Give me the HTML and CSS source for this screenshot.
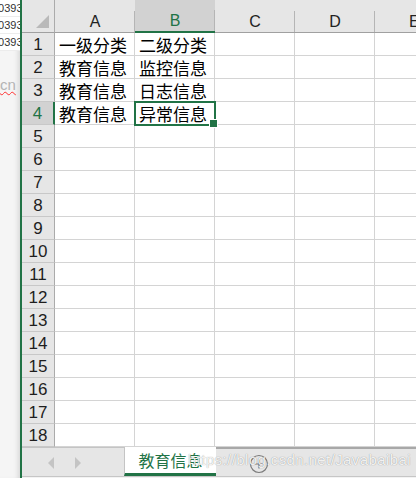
FILE: index.html
```html
<!DOCTYPE html>
<html lang="zh-CN">

<head>
  <meta charset="UTF-8">
  <meta name="viewport" content="width=device-width, initial-scale=1.0">
  <title>Excel sheet</title>
  <link rel="stylesheet" href="styles.css">
</head>

<body>
  <div class="screen">
    <div class="side">
      <div class="side-row">10393</div>
      <div class="side-row">10393</div>
      <div class="side-row">10393</div>
      <div class="side-rest"><span class="typo">cn</span></div>
    </div>

    <div class="book">
      <div class="sheet">
        <div class="corner">
          <svg width="14" height="14" viewBox="0 0 14 14"><polygon points="13,0 13,13 0,13" fill="#b9b9b9" /></svg>
        </div>
        <div class="col">A</div>
        <div class="col sel">B</div>
        <div class="col">C</div>
        <div class="col">D</div>
        <div class="col last">E</div>

        <div class="row">1</div>
        <div class="cell">一级分类</div>
        <div class="cell">二级分类</div>
        <div class="cell"></div>
        <div class="cell"></div>
        <div class="cell"></div>

        <div class="row">2</div>
        <div class="cell">教育信息</div>
        <div class="cell">监控信息</div>
        <div class="cell"></div>
        <div class="cell"></div>
        <div class="cell"></div>

        <div class="row">3</div>
        <div class="cell">教育信息</div>
        <div class="cell">日志信息</div>
        <div class="cell"></div>
        <div class="cell"></div>
        <div class="cell"></div>

        <div class="row sel">4</div>
        <div class="cell">教育信息</div>
        <div class="cell active">异常信息</div>
        <div class="cell"></div>
        <div class="cell"></div>
        <div class="cell"></div>

        <div class="row">5</div>
        <div class="cell"></div><div class="cell"></div><div class="cell"></div><div class="cell"></div><div class="cell"></div>
        <div class="row">6</div>
        <div class="cell"></div><div class="cell"></div><div class="cell"></div><div class="cell"></div><div class="cell"></div>
        <div class="row">7</div>
        <div class="cell"></div><div class="cell"></div><div class="cell"></div><div class="cell"></div><div class="cell"></div>
        <div class="row">8</div>
        <div class="cell"></div><div class="cell"></div><div class="cell"></div><div class="cell"></div><div class="cell"></div>
        <div class="row">9</div>
        <div class="cell"></div><div class="cell"></div><div class="cell"></div><div class="cell"></div><div class="cell"></div>
        <div class="row">10</div>
        <div class="cell"></div><div class="cell"></div><div class="cell"></div><div class="cell"></div><div class="cell"></div>
        <div class="row">11</div>
        <div class="cell"></div><div class="cell"></div><div class="cell"></div><div class="cell"></div><div class="cell"></div>
        <div class="row">12</div>
        <div class="cell"></div><div class="cell"></div><div class="cell"></div><div class="cell"></div><div class="cell"></div>
        <div class="row">13</div>
        <div class="cell"></div><div class="cell"></div><div class="cell"></div><div class="cell"></div><div class="cell"></div>
        <div class="row">14</div>
        <div class="cell"></div><div class="cell"></div><div class="cell"></div><div class="cell"></div><div class="cell"></div>
        <div class="row">15</div>
        <div class="cell"></div><div class="cell"></div><div class="cell"></div><div class="cell"></div><div class="cell"></div>
        <div class="row">16</div>
        <div class="cell"></div><div class="cell"></div><div class="cell"></div><div class="cell"></div><div class="cell"></div>
        <div class="row">17</div>
        <div class="cell"></div><div class="cell"></div><div class="cell"></div><div class="cell"></div><div class="cell"></div>
        <div class="row">18</div>
        <div class="cell"></div><div class="cell"></div><div class="cell"></div><div class="cell"></div><div class="cell"></div>
      </div>

      <div class="tabbar">
        <div class="nav">
          <svg width="8" height="12" viewBox="0 0 8 12"><polygon points="7,0 7,12 1,6" fill="#c4c4c4" /></svg>
          <svg width="8" height="12" viewBox="0 0 8 12"><polygon points="1,0 1,12 7,6" fill="#c4c4c4" /></svg>
        </div>
        <div class="tab">教育信息</div>
        <div class="rest">
          <svg class="add" width="20" height="20" viewBox="0 0 20 20">
            <circle cx="10" cy="10" r="8.5" fill="none" stroke="#7b7b7b" stroke-width="1.2" />
            <path d="M5.5 10 H14.5 M10 5.5 V14.5" stroke="#7b7b7b" stroke-width="1.2" />
          </svg>
        </div>
      </div>
      <div class="status"></div>

      <div class="watermark">https://blog.csdn.net/Javabaibai</div>
    </div>
  </div>
</body>

</html>
```

FILE: styles.css
```css
* {
  margin: 0;
  padding: 0;
  box-sizing: border-box;
}

body {
  width: 416px;
  height: 478px;
  overflow: hidden;
  background-color: #fff;
  font-family: "Liberation Sans", Arial, sans-serif;
}

.screen {
  display: flex;
  height: 478px;
}

/* 左側にはみ出している別ウィンドウ */
.side {
  width: 20px;
  display: flex;
  flex-direction: column;
  overflow: hidden;
  background-color: #f5f5f5;
  box-shadow: inset -5px 0 5px -3px rgba(0, 0, 0, 0.12);
}

.side-row {
  height: 17px;
  line-height: 17px;
  font-size: 11px;
  color: #333;
  background-color: #fff;
  border-bottom: 1px solid #ececec;
  text-indent: -8px;
  white-space: nowrap;
}

.side-rest {
  flex: 1;
  padding-top: 26px;
}

.typo {
  display: block;
  font-size: 15px;
  line-height: 16px;
  color: #b4b4b4;
  white-space: nowrap;
  text-decoration: underline wavy #ff3030;
  text-decoration-thickness: 1px;
}

.book {
  position: relative;
  flex: 1;
  display: flex;
  flex-direction: column;
  border-left: 2px solid #217346;
  overflow: hidden;
}

.sheet {
  display: grid;
  grid-template-columns: 33px repeat(4, 80px) 1fr;
  grid-template-rows: 33px repeat(18, 23px);
}

.corner {
  display: flex;
  align-items: flex-end;
  justify-content: flex-end;
  padding: 0 4px 3px 0;
  background-color: #e6e6e6;
  border-right: 1px solid #ababab;
  border-bottom: 1px solid #a0a0a0;
}

.col {
  display: flex;
  align-items: center;
  justify-content: center;
  padding-top: 11px;
  font-size: 16px;
  color: #222;
  background: linear-gradient(#b5b5b5, #b5b5b5) right bottom / 1px 21px no-repeat, #e6e6e6;
  border-bottom: 1px solid #a0a0a0;
}

.col.last {
  justify-content: flex-start;
  padding-left: 34px;
  background: #e6e6e6;
}

.col.sel {
  color: #217346;
  background: linear-gradient(#b5b5b5, #b5b5b5) right bottom / 1px 21px no-repeat, #d2d2d2;
  border-bottom: 2px solid #217346;
}

.row {
  display: flex;
  align-items: center;
  justify-content: center;
  padding-top: 2px;
  font-size: 17px;
  color: #1e1e1e;
  background-color: #e6e6e6;
  border-right: 1px solid #ababab;
  border-bottom: 1px solid #c8c8c8;
}

.row.sel {
  color: #217346;
  background-color: #d2d2d2;
  border-right: 2px solid #217346;
}

.cell {
  display: flex;
  align-items: flex-end;
  padding-left: 4px;
  font-family: "Noto Sans CJK SC", sans-serif;
  font-size: 17px;
  line-height: 21px;
  color: #000;
  white-space: nowrap;
  border-right: 1px solid #d4d4d4;
  border-bottom: 1px solid #d4d4d4;
}

.cell.active {
  position: relative;
  outline: 2px solid #217346;
  outline-offset: -1px;
  z-index: 1;
}

.cell.active::after {
  content: '';
  position: absolute;
  right: -4px;
  bottom: -4px;
  width: 7px;
  height: 7px;
  background-color: #217346;
  border: 1px solid #fff;
}

.tabbar {
  display: flex;
  height: 29px;
  background-color: #e6e6e6;
}

.nav {
  display: flex;
  align-items: center;
  gap: 19px;
  width: 102px;
  padding: 2px 0 0 25px;
  border-top: 1px solid #c4c4c4;
}

.tab {
  width: 92px;
  padding-top: 1px;
  text-align: center;
  font-family: "Noto Sans CJK SC", sans-serif;
  font-size: 16px;
  line-height: 25px;
  color: #217346;
  background-color: #fff;
  border-left: 1px solid #c4c4c4;
  border-bottom: 3px solid #217346;
}

.rest {
  flex: 1;
  display: flex;
  align-items: center;
  padding: 3px 0 0 33px;
  border-top: 2px solid #a8a8a8;
}

.status {
  flex: 1;
  background-color: #f3f3f3;
  border-top: 1px solid #c6c6c6;
}

/* 画像に乗っているブログの透かし */
.watermark {
  position: absolute;
  left: 166px;
  top: 451px;
  font-size: 15px;
  letter-spacing: 0.4px;
  color: rgba(255, 255, 255, 0.9);
  text-shadow: 0 0 1px rgba(0, 0, 0, 0.45);
  white-space: nowrap;
}
```
